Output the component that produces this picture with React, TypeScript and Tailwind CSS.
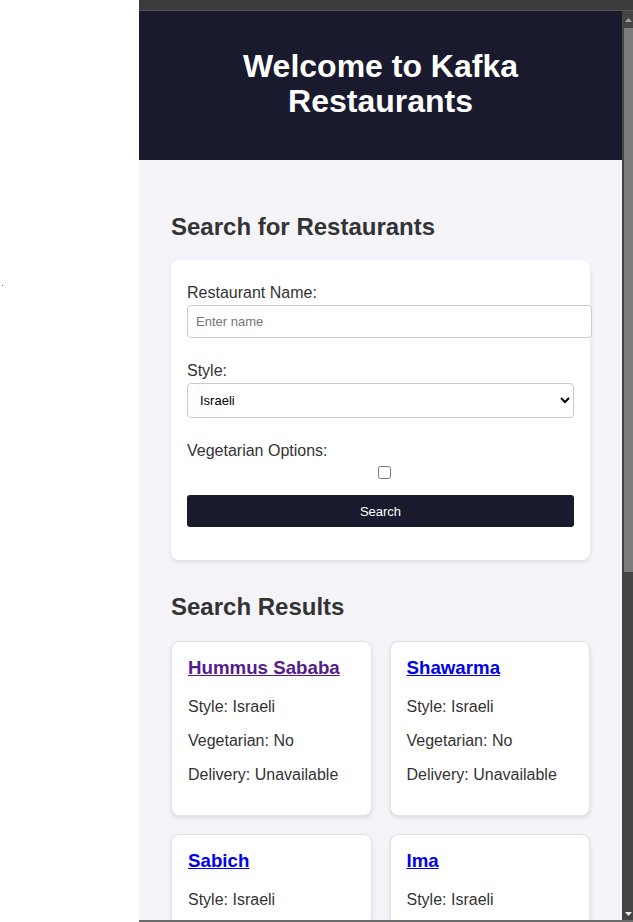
import React from 'react';

interface Restaurant {
  name: string;
  style: string;
  vegetarian: string;
  delivery: string;
  visited?: boolean;
}

const results: Restaurant[] = [
  { name: 'Hummus Sababa', style: 'Israeli', vegetarian: 'No', delivery: 'Unavailable', visited: true },
  { name: 'Shawarma', style: 'Israeli', vegetarian: 'No', delivery: 'Unavailable' },
  { name: 'Sabich', style: 'Israeli', vegetarian: 'Yes', delivery: 'Available' },
  { name: 'Ima', style: 'Israeli', vegetarian: 'No', delivery: 'Unavailable' },
];

const ResultCard: React.FC<{ item: Restaurant }> = ({ item }) => (
  <div className="rounded-lg border border-[#e2e2e6] bg-white px-4 pt-[15px] pb-[31px] shadow-[0_2px_4px_rgba(0,0,0,0.1)]">
    <h3 className="text-[18.72px] font-bold leading-[22px]">
      <a
        href="#"
        className={`underline ${item.visited ? 'text-[#551a8b]' : 'text-[#0000ee]'}`}
      >
        {item.name}
      </a>
    </h3>
    <p className="mt-[19px] text-base leading-[18px] text-[#333]">Style: {item.style}</p>
    <p className="mt-4 text-base leading-[18px] text-[#333]">Vegetarian: {item.vegetarian}</p>
    <p className="mt-4 text-base leading-[18px] text-[#333]">Delivery: {item.delivery}</p>
  </div>
);

export default function App() {
  return (
    <div className="flex h-[922px] w-[633px] overflow-hidden bg-white font-['Liberation_Sans',Arial,sans-serif]">
      <div className="relative w-[139px] shrink-0 bg-white">
        <span className="absolute left-[2px] top-[285px] h-px w-px bg-[#e03030]" />
      </div>

      <div className="flex min-w-0 flex-1 flex-col">
        <div className="h-[10px] shrink-0 bg-[#3c3c3c]" />
        <div className="h-px shrink-0 bg-[#575757]" />

        <div className="flex min-h-0 flex-1">
          <main className="min-w-0 flex-1 overflow-hidden bg-[#f4f4f9]">
            <header className="bg-[#1a1a2e] px-5 pt-[38px] pb-[41px] text-center">
              <h1 className="text-[32px] font-bold leading-[35px] text-white">
                Welcome to Kafka Restaurants
              </h1>
            </header>

            <div className="px-8 pt-[52px]">
              <h2 className="pt-px text-2xl font-bold leading-[27px] text-[#333]">
                Search for Restaurants
              </h2>

              <form
                className="mt-5 rounded-lg bg-white px-4 pt-[23px] pb-[33px] shadow-[0_2px_4px_rgba(0,0,0,0.1)]"
                onSubmit={(e) => e.preventDefault()}
              >
                <label className="block pt-px text-base leading-[18px] text-[#333]">Restaurant Name:</label>
                <input
                  type="text"
                  placeholder="Enter name"
                  className="mt-[3px] box-content block w-full rounded border border-[#ccc] bg-white px-2 py-[7px] text-[13px] leading-[17px] text-black placeholder:text-[#757575]"
                />

                <label className="mt-[23px] block pt-px text-base leading-[18px] text-[#333]">Style:</label>
                <select
                  defaultValue="Israeli"
                  className="mt-[3px] block h-[35px] w-full rounded border border-[#ccc] bg-white px-2 text-[13px] text-black"
                >
                  <option>Israeli</option>
                  <option>Italian</option>
                  <option>Asian</option>
                </select>

                <label className="mt-[23px] block pt-px text-base leading-[18px] text-[#333]">
                  Vegetarian Options:
                </label>
                <div className="mt-[6px] flex h-[13px] justify-center pl-2">
                  <input type="checkbox" className="m-0 h-[13px] w-[13px]" />
                </div>

                <button
                  type="submit"
                  className="mt-4 block h-8 w-full rounded-[3px] bg-[#1a1a2e] pt-px text-[13px] text-white"
                >
                  Search
                </button>
              </form>

              <h2 className="mt-8 pt-px text-2xl font-bold leading-[27px] text-[#333]">Search Results</h2>

              <div className="mt-[21px] grid grid-cols-2 gap-[18px]">
                {results.map((r) => (
                  <ResultCard key={r.name} item={r} />
                ))}
              </div>
            </div>
          </main>

          <div className="flex w-[11px] shrink-0 flex-col bg-[#444]">
            <div className="flex h-[17px] shrink-0 items-center justify-center pl-[2px]">
              <svg width="7" height="4" viewBox="0 0 7 4">
                <polygon points="0,4 3.5,0 7,4" fill="#a3a3a3" />
              </svg>
            </div>
            <div className="ml-[2px] h-[544px] shrink-0 bg-[#7b7b7b]" />
            <div className="flex-1" />
            <div className="flex h-[12px] shrink-0 items-center justify-center pl-[2px]">
              <svg width="7" height="4" viewBox="0 0 7 4">
                <polygon points="0,0 7,0 3.5,4" fill="#e8e8e8" />
              </svg>
            </div>
          </div>
        </div>

        <div className="h-[2px] shrink-0 bg-[#6b6b6b]" />
      </div>
    </div>
  );
}
